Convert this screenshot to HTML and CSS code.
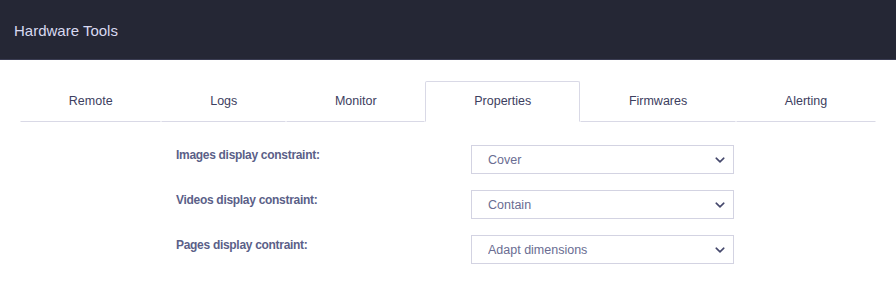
FILE: index.html
```html
<!DOCTYPE html>
<html lang="en">
<head>
    <meta charset="UTF-8">
    <meta name="viewport" content="width=device-width, initial-scale=1.0">
    <title>Hardware Tools</title>
    <link rel="stylesheet" href="styles.css">
</head>
<body>
    <header class="topbar">
        <span class="brand">Hardware Tools</span>
    </header>

    <div class="container">
        <ul class="tabs">
            <li class="tab">Remote</li>
            <li class="tab">Logs</li>
            <li class="tab">Monitor</li>
            <li class="tab active">Properties</li>
            <li class="tab">Firmwares</li>
            <li class="tab">Alerting</li>
        </ul>

        <form class="props">
            <div class="row">
                <label for="imgConstraint">Images display constraint:</label>
                <div class="select-wrap">
                    <select id="imgConstraint">
                        <option>Cover</option>
                        <option>Contain</option>
                        <option>Adapt dimensions</option>
                    </select>
                    <svg class="chevron" width="10" height="6" viewBox="0 0 10 6"><path d="M1.2 1.2l3.8 3.6 3.8-3.6" fill="none" stroke="#45486c" stroke-width="1.6" stroke-linecap="round" stroke-linejoin="round"/></svg>
                </div>
            </div>
            <div class="row">
                <label for="vidConstraint">Videos display constraint:</label>
                <div class="select-wrap">
                    <select id="vidConstraint">
                        <option>Contain</option>
                        <option>Cover</option>
                        <option>Adapt dimensions</option>
                    </select>
                    <svg class="chevron" width="10" height="6" viewBox="0 0 10 6"><path d="M1.2 1.2l3.8 3.6 3.8-3.6" fill="none" stroke="#45486c" stroke-width="1.6" stroke-linecap="round" stroke-linejoin="round"/></svg>
                </div>
            </div>
            <div class="row">
                <label for="pageConstraint">Pages display contraint:</label>
                <div class="select-wrap">
                    <select id="pageConstraint">
                        <option>Adapt dimensions</option>
                        <option>Cover</option>
                        <option>Contain</option>
                    </select>
                    <svg class="chevron" width="10" height="6" viewBox="0 0 10 6"><path d="M1.2 1.2l3.8 3.6 3.8-3.6" fill="none" stroke="#45486c" stroke-width="1.6" stroke-linecap="round" stroke-linejoin="round"/></svg>
                </div>
            </div>
        </form>
    </div>
</body>
</html>
```

FILE: styles.css
```css
body {
    font-family: "Liberation Sans", Arial, sans-serif;
    margin: 0;
    padding: 0;
    background-color: #fff;
    color: #3d4060;
}

.topbar {
    height: 60px;
    background-color: #252735;
    border-bottom: 1px solid #3a3c52;
    display: flex;
    align-items: center;
    padding-left: 14px;
    box-sizing: border-box;
}

.brand {
    color: #d8d9f0;
    font-size: 15px;
    margin-top: 1px;
}

.container {
    padding: 21px 20px 0;
}

.tabs {
    display: flex;
    list-style: none;
    margin: 0;
    padding: 0;
}

.tab {
    flex: 1 1 auto;
    text-align: center;
    font-size: 12.5px;
    color: #3d4060;
    height: 39px;
    line-height: 38px;
    border: 1px solid transparent;
    border-bottom-color: #d9d9e6;
    border-radius: 2px 2px 0 0;
}

.tab.active {
    border-color: #d9d9e6;
    border-bottom-color: transparent;
}

.props {
    margin: 23px 0 0 156px;
}

.row {
    display: grid;
    grid-template-columns: 295px 263px;
    margin-bottom: 16px;
}

label {
    font-size: 12px;
    font-weight: bold;
    letter-spacing: -0.3px;
    color: #5b5f88;
    padding-top: 3px;
}

.select-wrap {
    position: relative;
}

select {
    appearance: none;
    -webkit-appearance: none;
    width: 100%;
    height: 29px;
    padding: 0 14px 0 16px;
    border: 1px solid #d3d3e2;
    border-radius: 0;
    background-color: #fff;
    font-family: "Liberation Sans", Arial, sans-serif;
    font-size: 12.5px;
    color: #6a6d92;
}

.chevron {
    position: absolute;
    right: 9px;
    top: 12px;
    pointer-events: none;
}
```
